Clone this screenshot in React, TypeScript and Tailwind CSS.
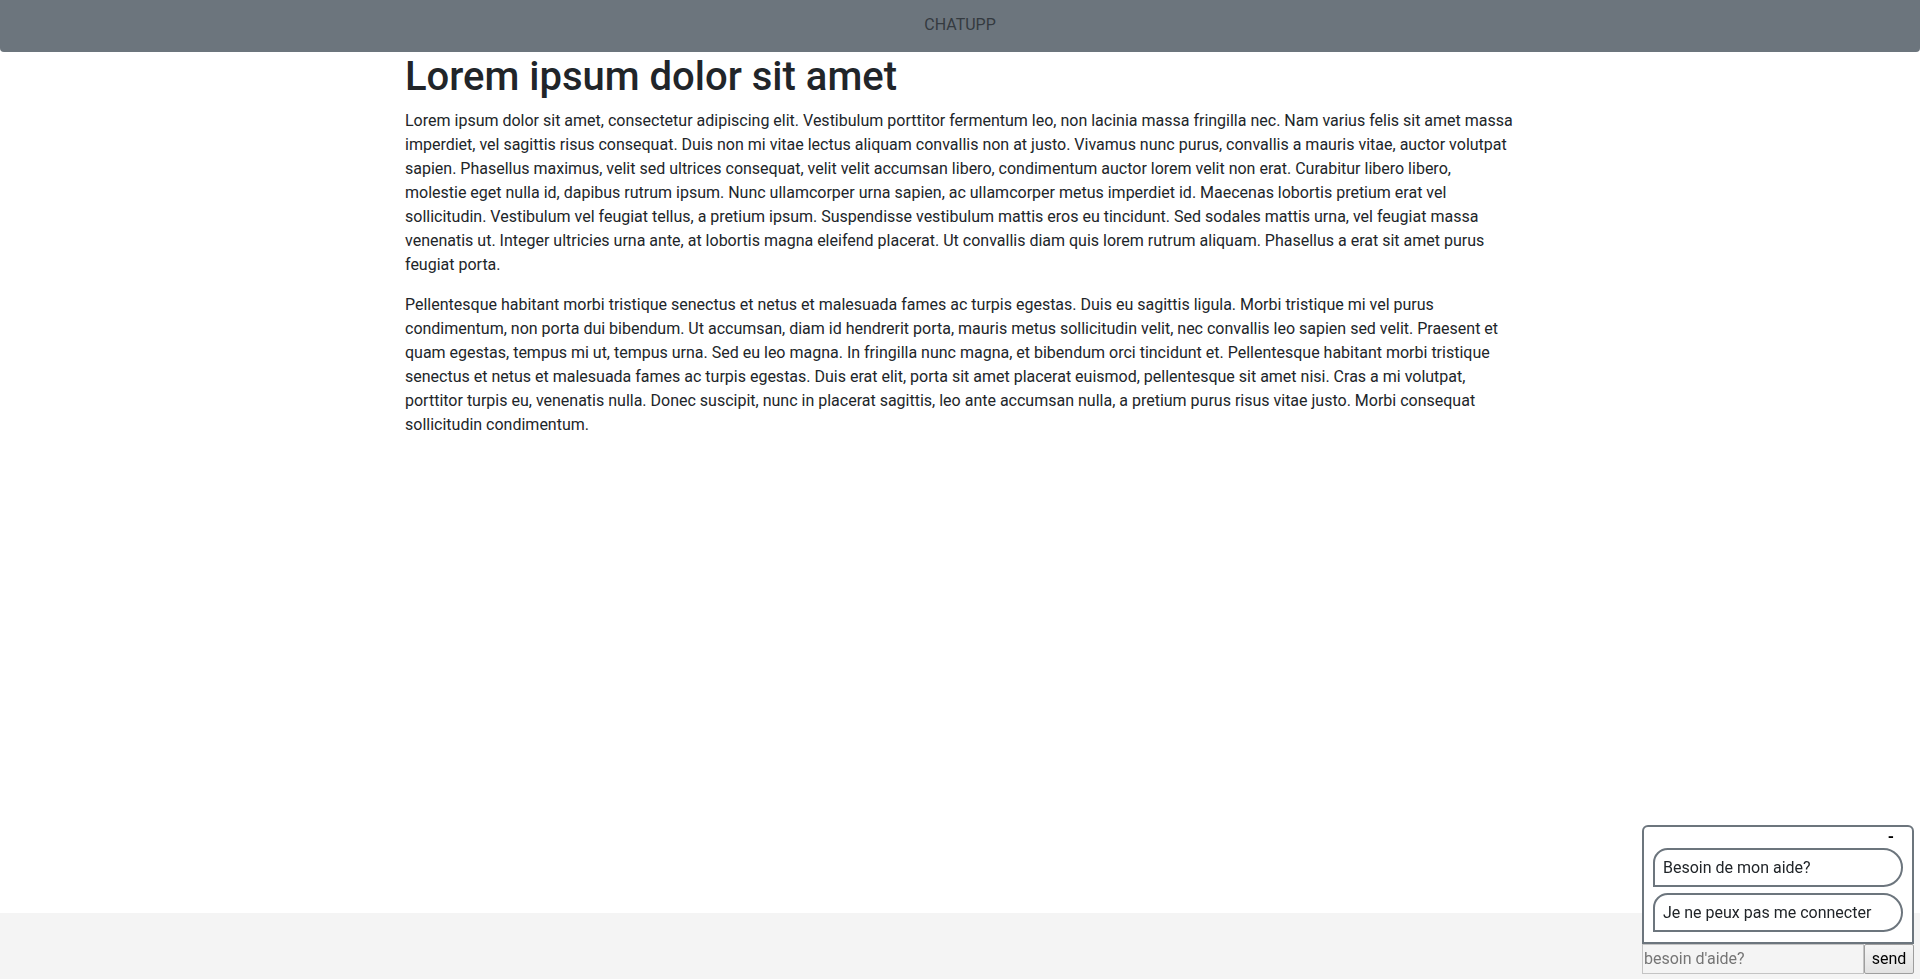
import { useState } from "react";

const ChatWidget = () => {
  const [message, setMessage] = useState("");

  const suggestions = ["Besoin de mon aide?", "Je ne peux pas me connecter"];

  return (
    <div className="fixed bottom-[5px] right-[6px] w-[272px] text-[16px] text-[#212529]">
      <div className="border-2 border-[#6c757d] rounded-t-[6px] bg-white">
        <div className="h-[21px] text-right pr-[18px] font-bold leading-[20px] text-black">-</div>
        <div className="flex flex-col gap-[6px] px-[9px] pb-[10px]">
          {suggestions.map((s) => (
            <div
              key={s}
              className="border-2 border-[#6c757d] rounded-tl-[15px] rounded-r-[20px] px-[8px] py-[5px] leading-[25px] cursor-pointer"
            >
              {s}
            </div>
          ))}
        </div>
      </div>
      <div className="flex h-[30px]">
        <input
          value={message}
          onChange={(e) => setMessage(e.target.value)}
          placeholder="besoin d'aide?"
          className="flex-1 min-w-0 border border-[#c4c4c4] px-[1px] text-[16px] placeholder:text-[#757575] outline-none"
        />
        <button className="w-[50px] border border-[#9e9e9e] rounded-[2px] bg-gradient-to-b from-[#f5f5f5] to-[#e2e2e2] text-black text-[16px]">
          send
        </button>
      </div>
    </div>
  );
};

const App = () => {
  return (
    <div className="min-h-screen flex flex-col bg-white text-[#212529] font-['Roboto',sans-serif] text-[16px] leading-[24px]">
      <header className="h-[52px] pt-[13px] bg-[#6c757d] rounded-b-[4px] text-center text-[#343a40]">
        CHATUPP
      </header>

      <main className="flex-1 pt-[1px]">
        <div className="w-[1140px] mx-auto px-[15px]">
          <h1 className="text-[40px] leading-[48px] font-medium mb-[8px]">Lorem ipsum dolor sit amet</h1>
          <p className="mb-[16px]">
            Lorem ipsum dolor sit amet, consectetur adipiscing elit. Vestibulum porttitor fermentum leo, non lacinia
            massa fringilla nec. Nam varius felis sit amet massa imperdiet, vel sagittis risus consequat. Duis non mi
            vitae lectus aliquam convallis non at justo. Vivamus nunc purus, convallis a mauris vitae, auctor volutpat
            sapien. Phasellus maximus, velit sed ultrices consequat, velit velit accumsan libero, condimentum auctor
            lorem velit non erat. Curabitur libero libero, molestie eget nulla id, dapibus rutrum ipsum. Nunc
            ullamcorper urna sapien, ac ullamcorper metus imperdiet id. Maecenas lobortis pretium erat vel
            sollicitudin. Vestibulum vel feugiat tellus, a pretium ipsum. Suspendisse vestibulum mattis eros eu
            tincidunt. Sed sodales mattis urna, vel feugiat massa venenatis ut. Integer ultricies urna ante, at
            lobortis magna eleifend placerat. Ut convallis diam quis lorem rutrum aliquam. Phasellus a erat sit amet
            purus feugiat porta.
          </p>
          <p className="mb-[16px]">
            Pellentesque habitant morbi tristique senectus et netus et malesuada fames ac turpis egestas. Duis eu
            sagittis ligula. Morbi tristique mi vel purus condimentum, non porta dui bibendum. Ut accumsan, diam id
            hendrerit porta, mauris metus sollicitudin velit, nec convallis leo sapien sed velit. Praesent et quam
            egestas, tempus mi ut, tempus urna. Sed eu leo magna. In fringilla nunc magna, et bibendum orci tincidunt
            et. Pellentesque habitant morbi tristique senectus et netus et malesuada fames ac turpis egestas. Duis erat
            elit, porta sit amet placerat euismod, pellentesque sit amet nisi. Cras a mi volutpat, porttitor turpis eu,
            venenatis nulla. Donec suscipit, nunc in placerat sagittis, leo ante accumsan nulla, a pretium purus risus
            vitae justo. Morbi consequat sollicitudin condimentum.
          </p>
        </div>
      </main>

      <footer className="h-[66px] bg-[#f4f4f4]"></footer>

      <ChatWidget />
    </div>
  );
};

export default App;
